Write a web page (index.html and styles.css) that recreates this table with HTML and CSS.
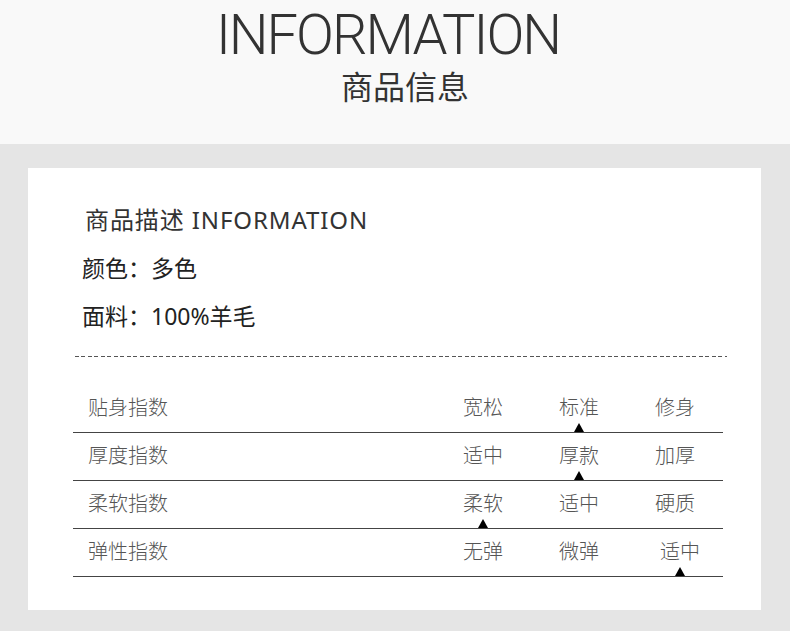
FILE: index.html
```html
<!DOCTYPE html>
<html lang="zh">
<head>
<meta charset="utf-8">
<link rel="stylesheet" href="styles.css">
</head>
<body>
<div class="header">
  <div class="title-en">INFORMATION</div>
  <div class="title-cn">商品信息</div>
</div>
<div class="main">
  <div class="card">
    <div class="info">
      <div class="info-title">商品描述 INFORMATION</div>
      <div class="info-line">颜色：多色</div>
      <div class="info-line">面料：100%羊毛</div>
    </div>
    <div class="dash"></div>
    <div class="table">
      <div class="row">
        <div class="label">贴身指数</div>
        <div class="cell">宽松</div>
        <div class="cell">标准<span class="mark"></span></div>
        <div class="cell">修身</div>
      </div>
      <div class="row">
        <div class="label">厚度指数</div>
        <div class="cell">适中</div>
        <div class="cell">厚款<span class="mark"></span></div>
        <div class="cell">加厚</div>
      </div>
      <div class="row">
        <div class="label">柔软指数</div>
        <div class="cell">柔软<span class="mark"></span></div>
        <div class="cell">适中</div>
        <div class="cell">硬质</div>
      </div>
      <div class="row">
        <div class="label">弹性指数</div>
        <div class="cell">无弹</div>
        <div class="cell">微弹</div>
        <div class="cell shift">适中<span class="mark"></span></div>
      </div>
    </div>
  </div>
</div>
</body>
</html>
```
FILE: styles.css
```css
* { box-sizing: border-box; }
html, body { margin: 0; padding: 0; }
body {
  width: 790px;
  height: 631px;
  overflow: hidden;
  font-family: "Noto Sans", "Noto Sans CJK SC", sans-serif;
  color: #333;
  background: #e5e5e5;
}
.header {
  height: 144px;
  background: #f9f9f9;
  display: flex;
  flex-direction: column;
  align-items: center;
  padding-top: 10px;
}
.title-en {
  font-family: Roboto, "Noto Sans", sans-serif;
  font-weight: 300;
  font-size: 56px;
  line-height: 50px;
  letter-spacing: -2px;
  color: #333;
  margin-left: -14px;
}
.title-cn {
  font-family: "Noto Sans CJK SC", sans-serif;
  font-weight: 400;
  font-size: 32px;
  line-height: 36px;
  margin-top: 7px;
  color: #333;
  margin-left: 20px;
}
.main {
  height: 487px;
  padding: 24px 29px 21px 28px;
}
.card {
  background: #fff;
  height: 100%;
  padding: 37px 34px 0 45px;
}
.info { padding-left: 9px; }
.info-title {
  font-size: 24px;
  line-height: 30px;
  letter-spacing: 0.9px;
  color: #333;
  padding-left: 3px;
  margin-bottom: 18px;
}
.info-line {
  font-size: 23px;
  line-height: 30px;
  color: #222;
  margin-bottom: 18px;
}
.dash {
  margin-top: 25px;
  margin-left: 2px;
  height: 1px;
  background: repeating-linear-gradient(to right, #555 0, #555 4px, transparent 4px, transparent 6.5px);
}
.table {
  margin-top: 28px;
  width: 650px;
}
.row {
  display: grid;
  grid-template-columns: 1fr 96px 96px 96px;
  height: 48px;
  border-bottom: 1px solid #444;
}
.label, .cell {
  font-family: "Noto Sans CJK SC", sans-serif;
  font-weight: 300;
  font-size: 20px;
  line-height: 26px;
  padding-top: 9px;
  color: #555;
}
.label { padding-left: 15px; }
.cell {
  position: relative;
  text-align: center;
}
.cell.shift { padding-left: 10px; }
.mark {
  position: absolute;
  bottom: 0;
  left: 50%;
  margin-left: -5px;
  width: 0;
  height: 0;
  border-left: 5.5px solid transparent;
  border-right: 5.5px solid transparent;
  border-bottom: 9px solid #000;
}
.cell.shift .mark { margin-left: 0; }
```
